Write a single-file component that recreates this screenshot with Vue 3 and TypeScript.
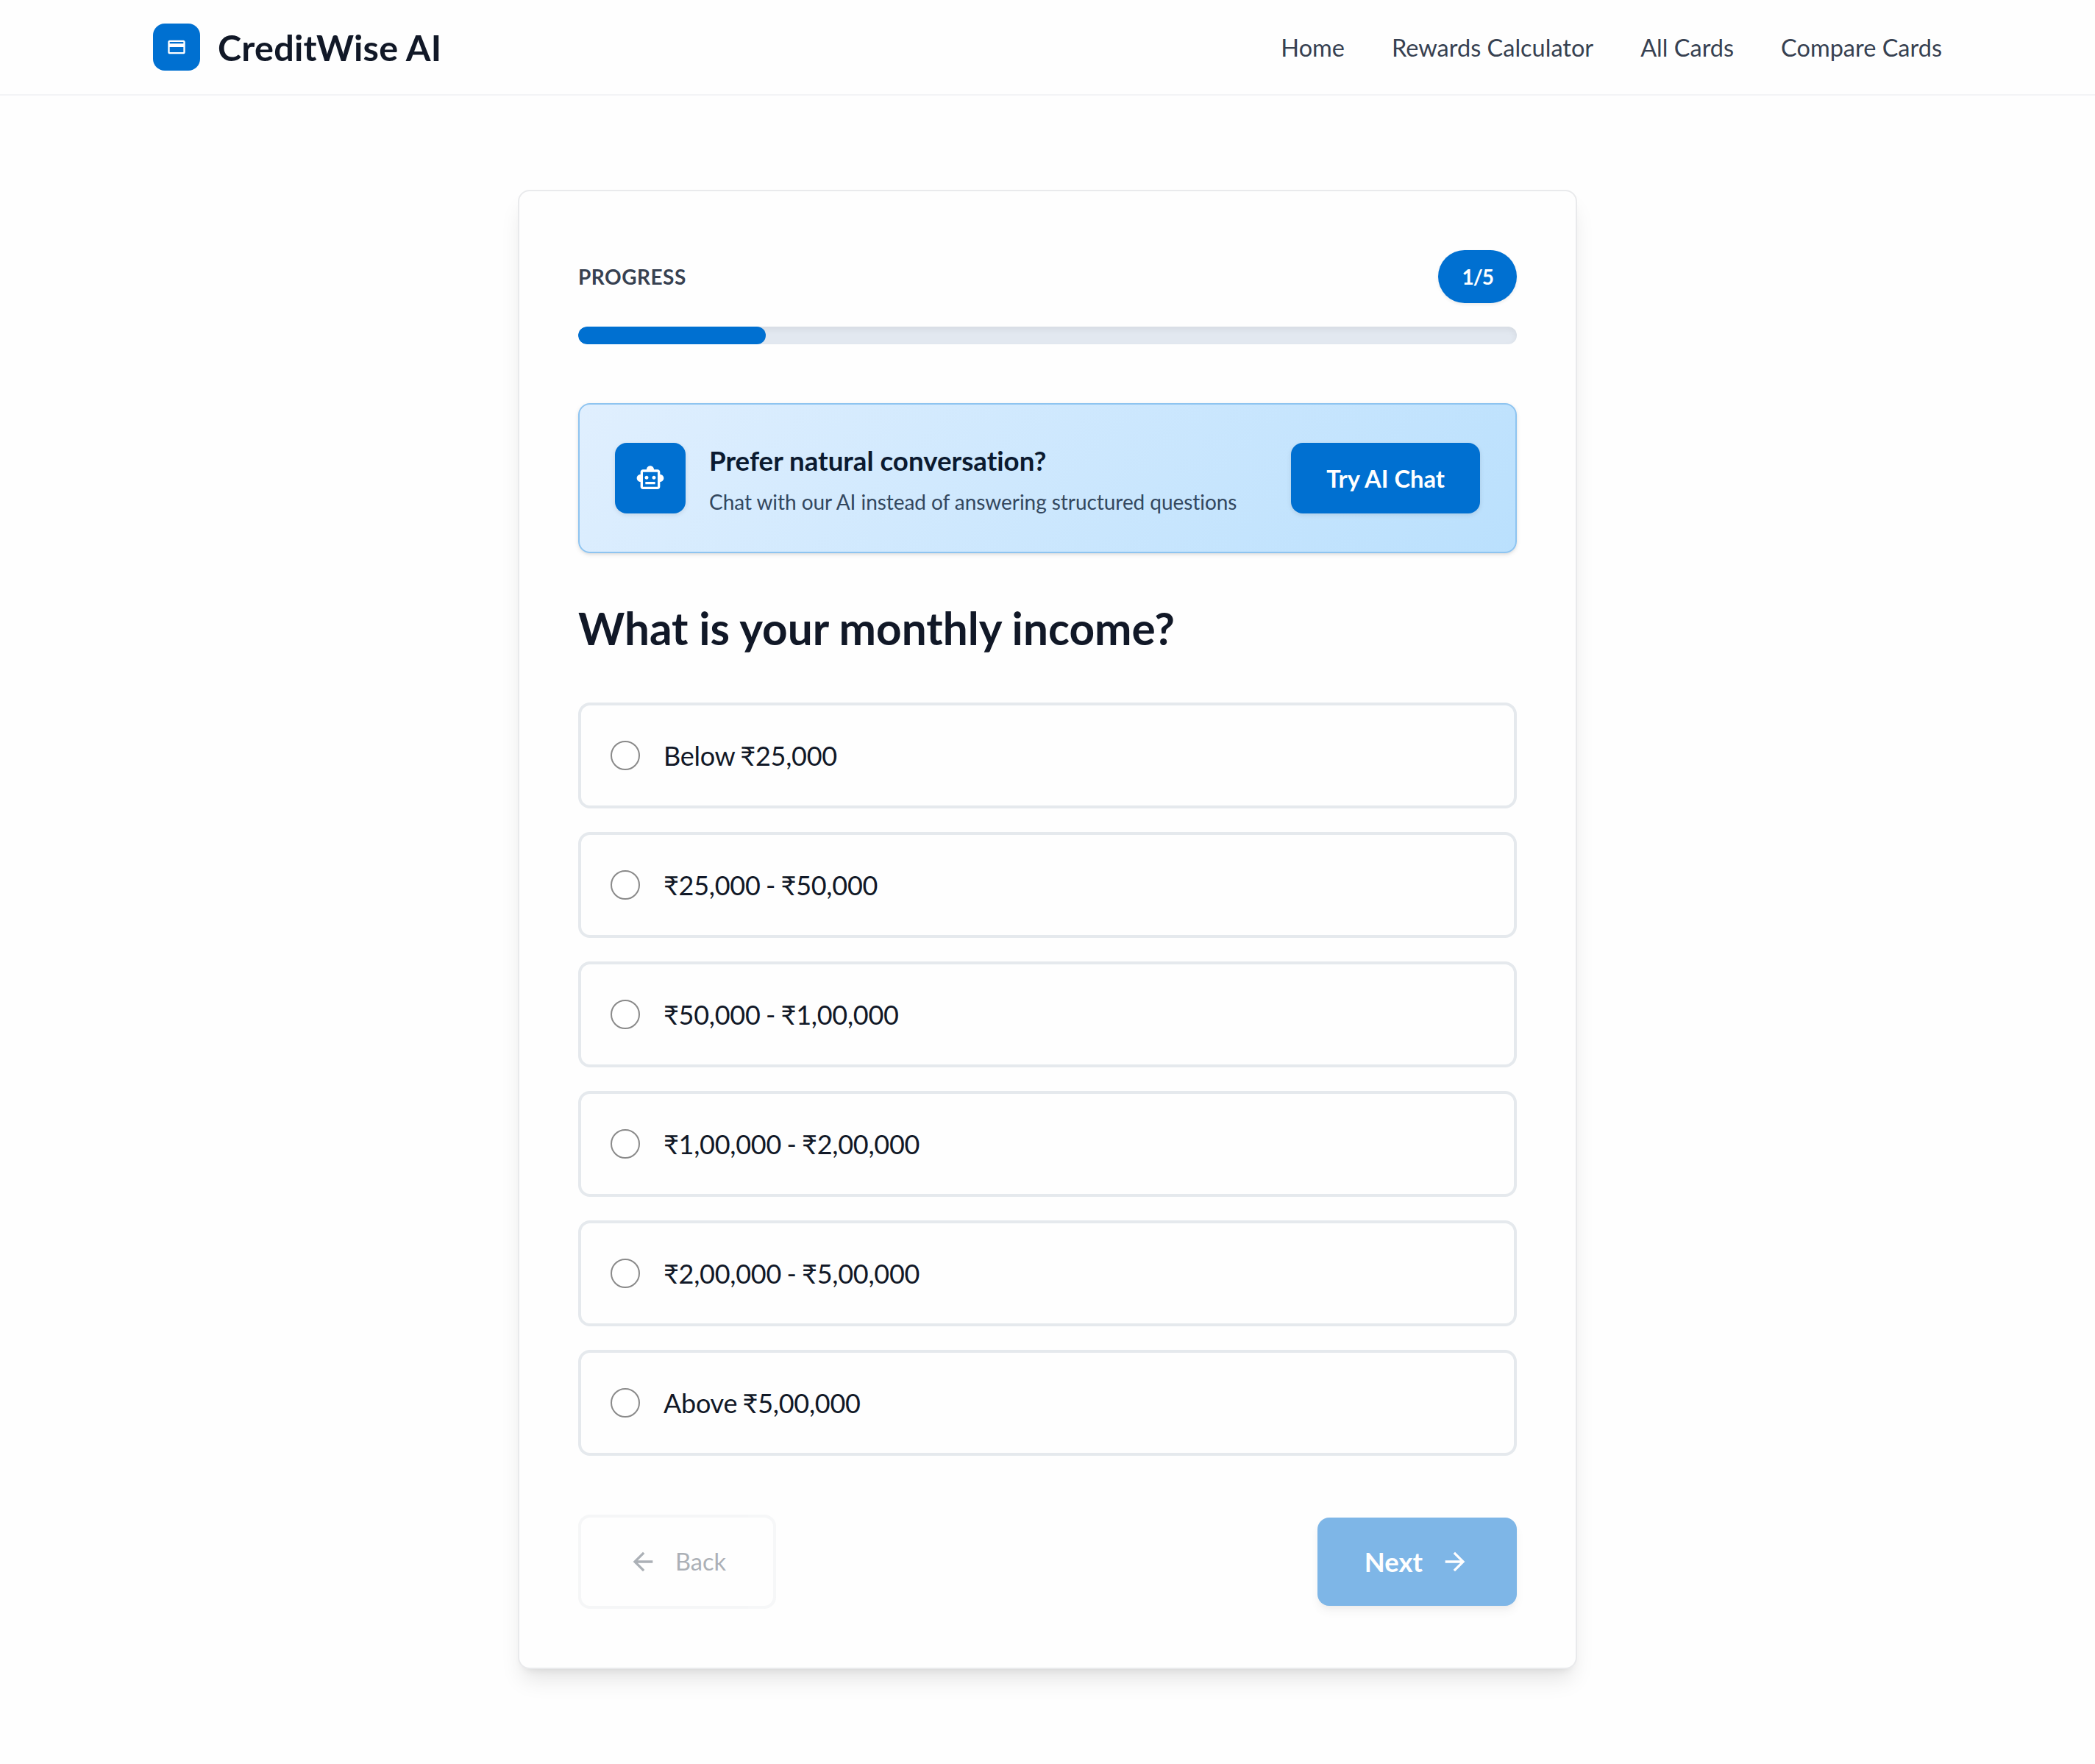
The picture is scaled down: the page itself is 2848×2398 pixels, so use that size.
<script setup lang="ts">
import { ref } from 'vue'

const links: string[] = ['Home', 'Rewards Calculator', 'All Cards', 'Compare Cards']
const options: string[] = [
  'Below ₹25,000',
  '₹25,000 - ₹50,000',
  '₹50,000 - ₹1,00,000',
  '₹1,00,000 - ₹2,00,000',
  '₹2,00,000 - ₹5,00,000',
  'Above ₹5,00,000',
]
const step = 1
const total = 5
const selected = ref<string>('')
</script>

<template>
  <div class="page">
    <header class="header">
      <div class="header-inner">
        <div class="brand">
          <span class="brand-tile">
            <svg class="brand-icon" viewBox="0 0 24 24" fill="currentColor">
              <path d="M20 4H4c-1.11 0-1.99.89-1.99 2L2 18c0 1.11.89 2 2 2h16c1.11 0 2-.89 2-2V6c0-1.11-.89-2-2-2zm0 14H4v-6h16v6zm0-10H4V6h16v2z" />
            </svg>
          </span>
          <span class="brand-name">CreditWise AI</span>
        </div>
        <nav class="nav">
          <a v-for="link in links" :key="link" class="nav-link">{{ link }}</a>
        </nav>
      </div>
    </header>

    <main class="card">
      <div class="progress-head">
        <span class="progress-label">PROGRESS</span>
        <span class="badge">{{ step }}/{{ total }}</span>
      </div>
      <div class="track">
        <div class="fill" :style="{ width: (step / total) * 100 + '%' }"></div>
      </div>

      <section class="banner">
        <span class="bot-tile">
          <svg class="icon" viewBox="0 0 24 24" fill="currentColor">
            <path d="M20 9V7c0-1.1-.9-2-2-2h-3c0-1.66-1.34-3-3-3S9 3.34 9 5H6c-1.1 0-2 .9-2 2v2c-1.66 0-3 1.34-3 3s1.34 3 3 3v4c0 1.1.9 2 2 2h12c1.1 0 2-.9 2-2v-4c1.66 0 3-1.34 3-3s-1.34-3-3-3zm-2 10H6V7h12v12zm-9-6c-.83 0-1.5-.67-1.5-1.5S8.17 10 9 10s1.5.67 1.5 1.5S9.83 13 9 13zm7.5-1.5c0 .83-.67 1.5-1.5 1.5s-1.5-.67-1.5-1.5.67-1.5 1.5-1.5 1.5.67 1.5 1.5zM8 15h8v2H8v-2z" />
          </svg>
        </span>
        <div class="banner-text">
          <div class="banner-title">Prefer natural conversation?</div>
          <div class="banner-sub">Chat with our AI instead of answering structured questions</div>
        </div>
        <button class="chat-btn">Try AI Chat</button>
      </section>

      <h1 class="question">What is your monthly income?</h1>

      <div class="options">
        <label v-for="option in options" :key="option" class="option">
          <input v-model="selected" class="radio" type="radio" name="income" :value="option" />
          <span>{{ option }}</span>
        </label>
      </div>

      <div class="actions">
        <button class="back">
          <svg class="icon" viewBox="0 0 24 24" fill="currentColor">
            <path d="M20 11H7.83l5.59-5.59L12 4l-8 8 8 8 1.41-1.41L7.83 13H20v-2z" />
          </svg>
          <span>Back</span>
        </button>
        <button class="next">
          <span>Next</span>
          <svg class="icon" viewBox="0 0 24 24" fill="currentColor">
            <path d="M12 4l-1.41 1.41L16.17 11H4v2h12.17l-5.58 5.59L12 20l8-8z" />
          </svg>
        </button>
      </div>
    </main>
  </div>
</template>

<style>
body {
  margin: 0;
  background: #fefefe;
}
</style>

<style scoped>
.page {
  min-height: 2398px;
  font-family: Lato, 'Open Sans', sans-serif;
  font-variant-ligatures: none;
  color: #111827;
}
.page * {
  box-sizing: border-box;
}
button {
  margin: 0;
  font-family: inherit;
  font-variant-ligatures: none;
  white-space: nowrap;
}
.icon {
  width: 40px;
  height: 40px;
  flex: none;
}
.header {
  border-bottom: 2px solid #f3f4f6;
}
.header-inner {
  width: 2432px;
  height: 128px;
  margin: 0 auto;
  display: flex;
  align-items: center;
  justify-content: space-between;
}
.brand {
  display: flex;
  align-items: center;
  gap: 24px;
}
.brand-tile {
  width: 64px;
  height: 64px;
  border-radius: 16px;
  background: #0070d1;
  color: #fff;
  display: flex;
  align-items: center;
  justify-content: center;
}
.brand-icon {
  width: 28px;
  height: 28px;
}
.brand-name {
  font-size: 48.6px;
  font-weight: 700;
  line-height: 64px;
  letter-spacing: 0.25px;
}
.nav {
  display: flex;
  gap: 64px;
  padding-top: 1px;
}
.nav-link {
  font-size: 32.5px;
  line-height: 56px;
  color: #374151;
}
.card {
  width: 1440px;
  margin: 128px auto 0;
  padding: 80px;
  border: 2px solid #e9eaec;
  border-radius: 16px;
  background: #fefefe;
  box-shadow: 0 20px 30px -6px rgba(0, 0, 0, 0.1), 0 8px 12px -8px rgba(0, 0, 0, 0.1);
}
.progress-head {
  display: flex;
  align-items: center;
  justify-content: space-between;
  margin-bottom: 32px;
}
.progress-label {
  font-size: 28px;
  font-weight: 700;
  line-height: 40px;
  letter-spacing: 0.5px;
  color: #374151;
}
.badge {
  padding: 16px 32px;
  border-radius: 36px;
  background: #0070d1;
  color: #fff;
  font-size: 28px;
  font-weight: 700;
  line-height: 40px;
  letter-spacing: -1px;
  box-shadow: 0 2px 4px rgba(0, 0, 0, 0.08);
}
.track {
  height: 24px;
  border-radius: 12px;
  overflow: hidden;
  background: #e2e8f0;
  box-shadow: inset 0 4px 8px rgba(0, 0, 0, 0.06);
}
.fill {
  height: 100%;
  border-radius: 12px;
  background: #0070d1;
}
.banner {
  margin-top: 80px;
  height: 204px;
  padding: 0 48px;
  display: flex;
  align-items: center;
  gap: 32px;
  border: 2px solid #8ec4f0;
  border-radius: 16px;
  background: linear-gradient(135deg, #e0effe 0%, #bae0fd 100%);
  box-shadow: 0 2px 6px rgba(0, 0, 0, 0.1), 0 2px 4px -2px rgba(0, 0, 0, 0.1);
}
.bot-tile {
  width: 96px;
  height: 96px;
  flex: none;
  border-radius: 16px;
  background: #0070d1;
  color: #fff;
  display: flex;
  align-items: center;
  justify-content: center;
  box-shadow: 0 2px 6px rgba(0, 0, 0, 0.1);
}
.banner-text {
  flex: 1;
}
.banner-title {
  font-size: 36.7px;
  font-weight: 700;
  line-height: 56px;
  margin-bottom: 8px;
  color: #0b1a30;
}
.banner-sub {
  font-size: 28px;
  line-height: 40px;
  letter-spacing: -0.06px;
  color: #33475e;
}
.chat-btn {
  height: 96px;
  padding: 0 48px;
  border: 0;
  border-radius: 16px;
  background: #0070d1;
  color: #fff;
  font-size: 32.7px;
  font-weight: 700;
  box-shadow: 0 2px 6px rgba(0, 0, 0, 0.1);
}
.question {
  margin: 64px 0;
  font-size: 60.3px;
  font-weight: 700;
  line-height: 75px;
}
.options {
  display: flex;
  flex-direction: column;
  gap: 32px;
}
.option {
  height: 144px;
  padding: 0 40px;
  display: flex;
  align-items: center;
  gap: 32px;
  border: 4px solid #e5e9ed;
  border-radius: 16px;
  font-size: 36px;
  line-height: 56px;
  letter-spacing: -0.26px;
  word-spacing: -1.5px;
}
.radio {
  appearance: none;
  width: 40px;
  height: 40px;
  margin: 0;
  border: 2px solid #8a8a8a;
  border-radius: 50%;
  background: #fff;
}
.actions {
  margin-top: 80px;
  display: flex;
  align-items: center;
  justify-content: space-between;
}
.back,
.next {
  display: flex;
  align-items: center;
  gap: 24px;
  padding: 32px 64px;
  border-radius: 16px;
  line-height: 56px;
  opacity: 0.5;
}
.back {
  border: 4px solid #eeeff1;
  background: transparent;
  color: #5b6471;
  font-size: 32.6px;
}
.next {
  border: 0;
  background: #0070d1;
  color: #fff;
  font-size: 36.4px;
  font-weight: 700;
  box-shadow: 0 8px 12px -2px rgba(0, 0, 0, 0.1), 0 4px 8px -4px rgba(0, 0, 0, 0.1);
}
</style>
